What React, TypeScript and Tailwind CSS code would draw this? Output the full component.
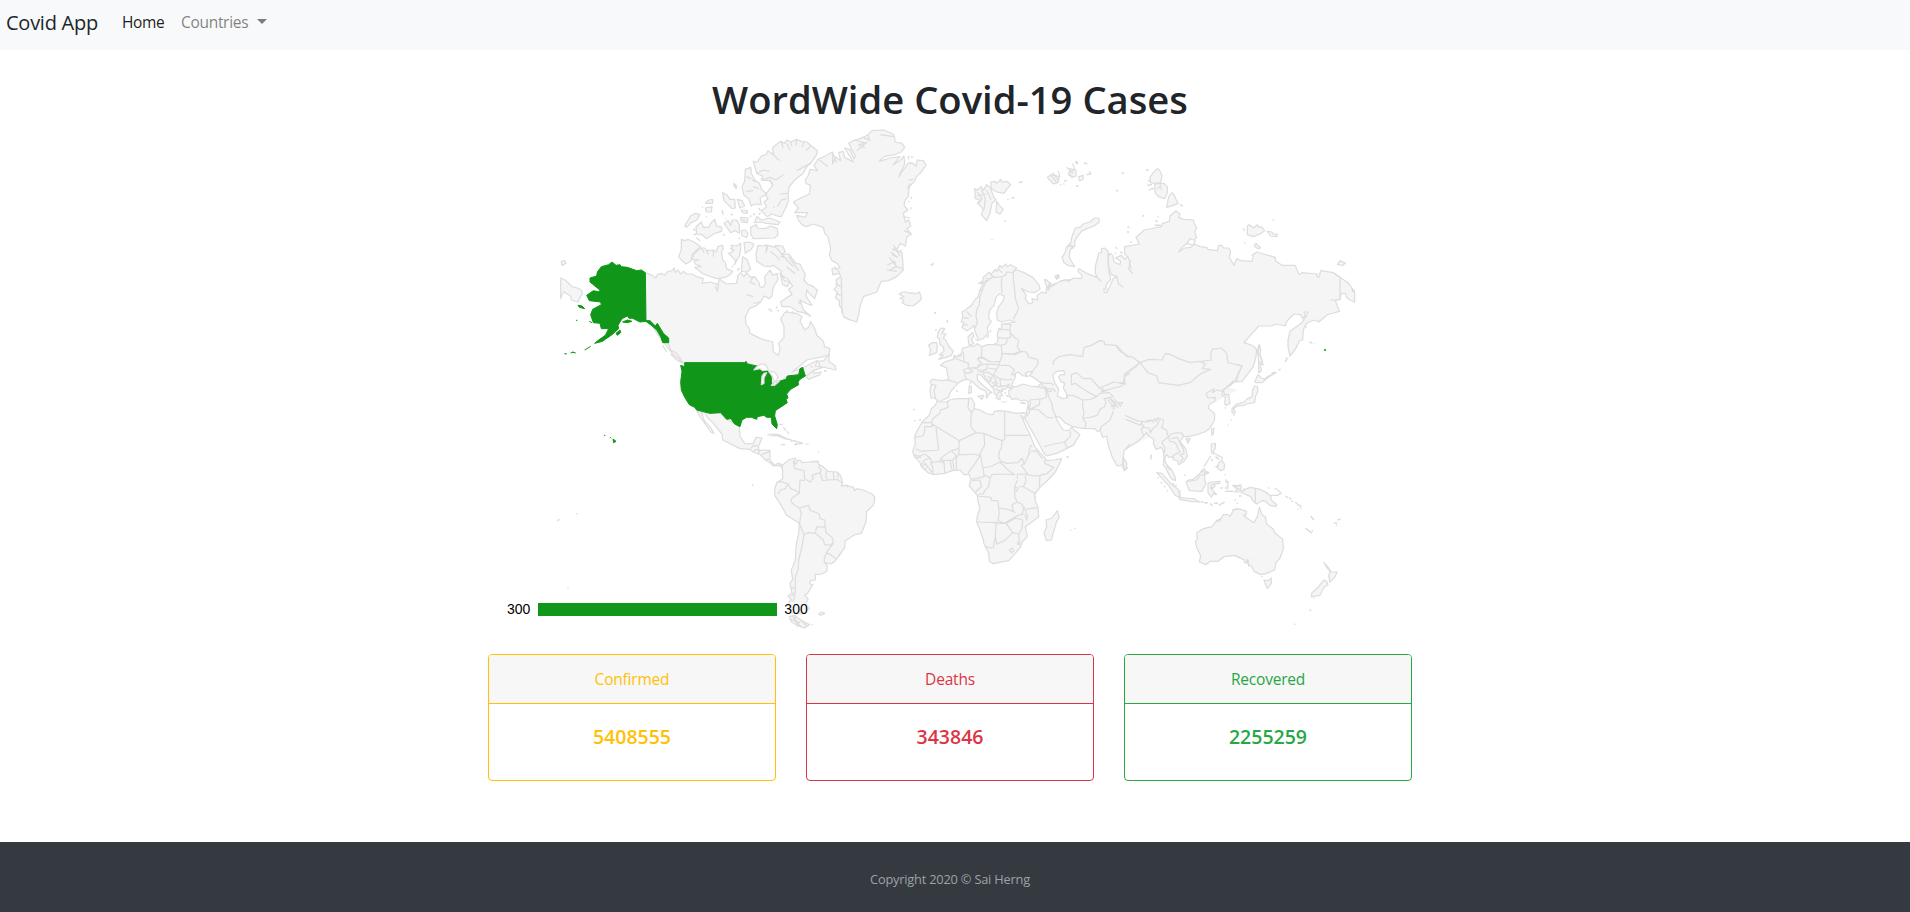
import React from "react";

type Region = { x: number; y: number; land: string[]; lines?: string[]; water?: string[]; active?: string[]; specks?: string[] };

const arctic: Region = {
  x: 540,
  y: 120,
  land: [
    "M316,458 336,466 348,474 352,464 364,460 374,466 384,454 396,452 402,444 406,458 414,450 422,462 430,454 440,462 456,462 470,470 490,476 486,490 510,486 534,494 538,476 550,486 562,492 590,490 594,466 602,458 612,470 620,458 632,472 644,470 656,486 660,500 670,502 676,490 674,470 684,458 690,450 698,466 712,460 714,480 700,500 696,528 688,536 672,528 662,546 650,556 628,566 616,590 618,612 628,626 630,640 662,656 698,666 700,696 714,706 720,690 716,670 732,652 732,620 722,596 736,576 752,578 770,580 786,590 780,604 794,630 806,622 812,604 826,630 830,646 850,664 854,680 870,686 866,706 850,710 800,720 782,736 756,756 800,738 822,726 832,722 826,738 848,742 820,752 806,764 794,768 738,772 706,796 690,780 660,742 616,728 434,728 424,726 412,714 400,704 384,684 370,664 350,640 340,620 316,602z",
    "M62,474 76,480 96,500 112,504 124,510 128,520 120,532 114,546 94,540 92,528 72,516 66,524 62,536z",
    "M64,424 74,422 78,430 66,436z",
    "M424,358 434,362 444,358 462,366 482,380 468,392 458,402 452,424 438,432 426,422 416,410 424,390z",
    "M482,384 494,384 500,392 520,390 528,396 534,380 548,376 550,388 544,396 548,420 556,428 560,446 578,454 570,464 556,472 530,476 490,462 464,442 484,440 466,432 462,424 478,420 458,418 460,404z",
    "M574,376 590,378 602,370 602,390 598,408 588,424 578,412 566,400 578,396z",
    "M612,368 628,366 642,372 634,388 616,400z",
    "M608,410 622,420 632,448 620,456 604,454z",
    "M654,376 672,378 680,374 678,398 684,376 708,382 706,376 728,378 736,396 724,404 746,402 768,430 780,432 796,464 792,480 802,492 820,500 832,510 824,536 806,518 800,510 798,528 816,556 802,552 780,540 790,570 812,588 790,578 772,574 750,560 726,560 722,546 744,530 756,524 746,508 758,498 744,478 722,464 724,454 700,436 690,440 672,438 650,424 648,400z",
    "M720,458 734,482 750,486 742,500 728,494z",
    "M652,324 676,326 692,318 712,326 714,344 704,354 640,356 632,342 632,322 650,314z",
    "M650,290 664,300 690,294 720,306 714,314 680,310 662,306 644,308z",
    "M640,124 652,126 664,108 678,104 684,92 700,104 698,84 708,74 722,64 734,70 740,60 752,66 770,58 784,64 800,66 832,92 830,104 812,130 800,140 790,160 764,180 748,200 744,220 746,240 738,262 724,290 712,288 696,282 682,290 664,272 680,260 672,246 684,236 676,224 698,196 690,182 664,180 668,168 650,160z",
    "M616,148 632,142 634,160 644,180 658,190 666,210 680,222 660,234 664,254 644,252 634,258 626,236 612,226 606,200 614,184z",
    "M468,320 484,306 490,322 506,322 512,310 524,298 530,318 546,322 544,334 520,342 500,356 486,344 470,342z",
    "M434,318 452,288 466,280 480,284 470,300 454,308 440,322z",
    "M552,310 564,302 572,316 576,300 590,300 598,314 598,340 586,332 572,338z",
    "M604,332 616,330 624,340 620,352 606,348z",
    "M548,218 562,226 570,238 584,238 586,264 576,266 552,242z",
    "M592,238 606,242 614,258 600,264z",
    "M496,250 506,240 518,238 518,250z",
    "M496,264 516,260 514,276 500,276z",
    "M602,292 624,294 622,308 604,306z",
    "M604,270 622,272 622,280 608,278z",
    "M480,362 470,354z",
    "M582,190 590,198 588,206z",
    "M840,740 834,724 852,722 868,700 866,724 886,738 888,750 862,744z",
    "M798,768 820,752 822,760 844,756 840,764 806,778z",
  ],
  lines: [
    "M700,104 718,122M722,64 730,84M740,70 750,90M752,66 756,80M770,58 768,78M792,66 786,82M812,78 798,92M812,130 770,152M650,160 670,150 688,154M664,180 690,172 708,180 730,164M700,196 690,180M744,220 720,222M740,236 724,240 712,260",
    "M636,180 650,186M640,200 656,206M618,214 640,212M620,170 634,176",
    "M536,494 532,514 526,498M640,470 630,486 646,494M660,546 640,550M640,530 620,524M370,680 376,690M384,668 392,690 410,700 430,730 410,720 392,702M368,676 380,696",
    "M484,384 492,398M500,392 506,404M520,390 520,410M570,384 584,392M690,394 706,406 720,420M710,384 740,420 760,440M720,408 742,416M740,440 766,462M746,410 776,452",
  ],
  specks: [
    "M486,262h3M498,290h3M546,270l4,14M556,296h3M572,282l6,3M608,300l8,2M640,280l4,6M630,290l4,-3M656,264l6,8M662,278l-6,6M700,262h4M548,344h6M460,326l6,6M460,344l10,-2M596,356l5,-2M686,566l10,8M708,566l4,-6M716,574l-3,-4M740,570l2,8M756,574l3,6M808,590v2M774,546l8,4M590,420l-8,16M598,444l-6,8M575,438l4,4M582,192v8M852,752l8,2M812,740h6",
  ],
  active: [
    "M316,458 304,450 290,452 262,442 244,440 240,434 228,436 216,426 206,434 184,440 172,456 170,468 150,474 150,486 172,504 180,510 178,516 160,512 140,526 148,542 182,546 184,554 158,568 152,584 160,608 180,610 184,626 206,626 196,646 176,660 164,670 188,664 196,658 216,644 236,626 234,616 246,596 262,588 268,596 276,594 300,606 318,604 334,616 350,630 362,650 368,668 386,668 386,654 370,640 352,610 346,618 330,602 318,602z",
    "M114,556 126,558 134,566 118,562z",
    "M228,640 240,630 242,638 232,646z",
    "M134,690 152,679M73,701 81,702M92,699 98,696 107,699M148,604 156,608M108,601h4M248,606 262,600 276,604 262,608z",
  ],
};

const north: Region = {
  x: 780,
  y: 120,
  land: [
    "M40,246 58,236 88,222 92,196 78,190 76,180 84,168 90,148 104,150 112,152 102,136 114,118 136,108 150,100 158,96 158,132 166,110 182,122 176,98 190,94 194,112 220,126 194,84 210,88 222,116 226,108 206,70 220,62 234,58 254,50 264,44 276,32 310,30 340,42 344,54 346,66 366,70 374,82 364,96 344,104 312,110 298,124 330,114 360,110 340,134 362,120 372,108 374,132 356,170 370,150 384,130 396,128 408,138 412,120 430,122 438,136 422,158 408,172 404,184 388,200 384,230 376,240 372,256 384,270 370,280 376,306 386,300 392,318 380,326 394,342 380,352 376,378 360,370 354,384 338,388 366,398 368,420 370,450 350,470 326,482 304,484 290,516 250,530 240,560 236,584 230,606 206,598 190,590 186,568 178,556 178,542 166,534 172,518 162,508 172,496 168,480 182,470 178,460 158,464 156,446 180,444 172,430 156,422 148,404 152,386 144,350 134,340 130,322 100,312 78,320 66,314 56,302 50,286 76,292 82,278 44,278 56,264z",
    "M358,522 372,530 360,534 372,542 366,548 380,556 400,558 422,540 424,532 418,516 404,522 398,518 390,520 380,516 368,516z",
    "M584,206 592,210 604,200 610,212 620,194 632,204 640,230 648,240 636,250 630,280 620,302 604,284 610,268 600,256 592,250 600,240 586,236z",
    "M632,186 644,184 650,190 662,178 666,186 680,184 692,194 680,208 672,220 650,216 634,206z",
    "M650,244 658,256 670,268 660,282 648,276z",
  ],
  lines: [
    "M118,120 144,140M158,100 170,128M224,60 258,70 236,74 254,84M230,92 262,66M250,52 272,62M264,44 268,60M300,44 340,50M328,412 350,440 368,446M322,436 344,424 348,440 330,450 346,440M332,396 352,412 336,404M340,376 356,396 366,390M350,392 360,408M320,450 350,454M184,472 186,580M162,440 180,458M166,492 184,500M168,520 182,526M592,216 606,236 596,250M604,210 616,236 612,270M620,210 634,240M590,228 620,222M384,180 400,178M392,190 382,206M372,332 392,340M370,290 390,294",
  ],
  specks: ["M716,188l12,-3M682,238h4M694,234l10,-1M673,305l4,-3M634,359h4M453,436l8,-5M462,577l6,3M502,603v5M386,108v10M396,108v6M388,128l4,4M392,232l4,4M392,262v6M384,244l4,2M466,632l4,-4"],
};

const americas: Region = {
  x: 540,
  y: 320,
  land: [
    "M600,320 584,312 560,298 542,278 510,280 470,272 480,290 500,318 512,336 522,340 510,320 494,304 484,278 498,278 500,290 520,310 546,342 548,360 600,386 628,388 640,396 660,404 676,420 690,428 700,438 716,436 730,446 726,434 714,430 704,436 690,420 690,392 672,390 656,392 656,378 666,354 648,352 640,370 616,372 600,350 598,318",
  ],
  lines: [
    "M630,388 640,376 654,378M640,396 648,388 660,392 654,402M664,404 690,394M688,418 676,418M682,346 692,342 716,344 736,354 754,360 734,356 710,346 690,348M752,364 762,362 788,370 764,374 770,368M722,374h14M796,372h10M718,314h10M730,322l8,10M742,334l4,8M834,397h3M637,493l2,5M52,602 60,598M108,581h4M82,806h4",
  ],
  active: [
    "M434,128 614,128 618,124 622,132 660,140 684,154 694,168 694,184 696,196 706,194 718,184 738,178 742,168 776,164 780,146 788,142 796,168 780,178 774,186 776,194 752,208 740,222 744,234 738,238 742,248 706,272 704,288 712,314 710,326 696,312 694,292 680,292 672,286 652,290 650,298 634,292 620,292 606,300 600,320 584,312 572,296 560,298 542,278 510,280 470,270 464,262 448,254 434,232 424,210 422,186 426,154 422,136 434,140z",
    "M192,346h4M210,352l4,2M219,357 228,364 221,368z",
  ],
  water: [
    "M642,150 650,140 662,132 676,134 686,150 668,152 660,146z",
    "M664,194 666,168 672,160 680,158 672,174 672,190z",
    "M686,154 704,156 714,170 710,182 702,184 696,168z",
    "M694,196 706,186 718,184 704,196z",
  ],
};

const southAmerica: Region = {
  x: 760,
  y: 430,
  land: [
    "M66,108 74,100 86,90 104,84 108,88 102,98 108,102 112,92 120,90 126,98 150,96 176,94 174,102 186,108 204,124 232,126 242,138 248,158 244,168 256,166 280,172 284,182 290,176 310,180 336,192 344,200 344,212 340,226 320,244 318,276 304,310 284,314 256,332 254,352 238,376 226,392 214,402 194,398 202,408 200,424 186,432 166,434 166,450 150,452 150,462 158,464 144,488 134,496 144,506 138,520 148,536 130,552 96,550 86,516 94,510 84,498 96,490 90,460 98,448 94,420 106,390 108,350 116,310 118,280 80,256 60,220 44,196 44,180 50,158 68,146 68,124z",
    "M88,560 104,556 122,570 148,584 134,594 112,586 94,576z",
  ],
  lines: [
    "M50,158 62,154 84,162 76,176 62,180 54,192M84,162 92,176 104,180 118,190 120,150 134,152M118,190 96,204 92,214 104,226 118,234 146,226 150,240 178,252 180,266 194,270 196,292M118,234 124,250 118,280 132,314M132,314 142,308 166,310 170,290 196,292 198,308 216,322 220,338 210,346 194,344 190,330 166,310M132,314 126,350 116,390 114,420 106,440 106,470 104,500 98,516M220,340 206,358 198,370 192,390 194,398M198,368 212,374 228,386M100,92 104,116 132,122 134,146 150,156 160,146 156,136 180,128 184,120 176,112 180,104M180,128 188,152 204,150 232,148 246,158M200,124 196,138 204,150M220,126 222,148M234,128 234,144M244,168 258,166",
    "M98,560 124,592M104,556 112,590M118,566 140,588M92,568 120,578M90,470 104,476M94,500 104,488M236,378l6,-10M262,164v8M154,94h20M174,66h3M176,552l8,-6 10,4 -12,6zM154,584h4",
  ],
};

const europe: Region = {
  x: 900,
  y: 240,
  land: [
    "M604,124 590,112 560,100 536,86 534,94 546,106 544,116 520,114 506,124 496,120 476,126 450,142 446,150 440,146 450,130 438,118 434,124 440,138 438,160 426,156 412,166 412,180 396,176 398,188 388,192 376,178 378,164 364,146 386,156 404,158 420,148 418,136 398,112 372,98 352,90 340,94 350,84 332,74 322,80 318,72 306,82 300,76 290,94 286,88 272,104 268,96 250,112 248,124 236,130 250,130 240,150 234,170 222,182 216,194 196,210 186,216 188,230 184,246 192,248 186,262 200,272 214,264 222,256 226,276 232,290 236,300 250,296 264,282 262,262 274,244 266,235 268,212 282,196 288,172 298,162 312,168 310,182 296,200 290,218 292,240 304,246 328,240 346,246 304,252 306,264 298,266 292,282 294,304 284,314 262,314 246,320 232,312 218,320 206,312 204,290 218,278 222,288 214,298 222,310 208,318 200,322 188,324 184,340 170,350 162,346 160,358 146,362 134,366 122,376 140,384 142,400 146,418 128,422 96,418 90,424 94,434 90,452 93,474 104,474 116,486 128,480 146,472 150,458 164,440 180,425 196,418 210,420 222,430 240,446 256,452 260,462 258,474 262,472 268,460 276,458 256,442 242,430 232,418 232,404 242,404 254,418 266,430 280,446 284,462 292,468 288,474 300,480 300,468 308,466 298,452 308,454 306,446 316,448 324,440 334,446 326,452 328,468 336,478 352,476 362,482 374,480 384,484 384,496 378,524 372,530 386,556 400,580 416,610 432,640 440,648 470,640 500,626 522,614 526,604 540,584 520,568 516,560 506,572 490,570 478,552 466,530 480,532 494,548 514,558 530,562 554,566 584,566 592,574 600,570 608,592 620,588 624,612 636,650 650,676 660,678 668,672 672,632 690,612",
    "M122,264 134,266 126,280 138,282 130,294 138,302 146,318 160,334 154,346 138,352 116,358 130,346 118,344 132,334 130,320 120,314 118,296 112,292 114,278z",
    "M86,316 96,308 110,308 112,322 110,338 88,346 92,330z",
    "M208,436 214,440 214,458 206,460z",
    "M234,468 252,466 246,478z",
    "M670,652 680,668 680,682 672,692z",
  ],
  water: [
    "M334,440 340,422 346,412 346,400 356,396 366,406 384,410 376,400 390,394 398,396 388,406 400,412 424,430 412,440 390,438 370,432 350,440z",
    "M458,404 470,394 492,392 494,404 482,404 476,410 482,424 494,430 490,444 500,462 500,474 488,476 472,468 476,448 464,428z",
  ],
  lines: [
    "M226,264 232,246 228,228 230,210 238,194 240,170 250,142 258,126 276,112 290,112 306,110 318,104 320,96 340,98M340,94 340,120 344,150 346,176 356,206 340,238M306,112 304,130 306,160",
    "M312,252 332,254 330,270 316,268 300,270M330,270 332,292 316,296 292,292M328,276 346,294 356,300 352,320 362,336 346,344 304,340M322,298 318,312 302,316 282,312",
    "M246,320 244,352 272,366 300,364 306,348 304,316M304,340 340,342 360,334 380,336 386,352 412,358 414,372 396,396M300,364 296,376 326,376 344,390 334,404 346,404M264,384 290,388 296,378M290,390 280,404 300,416 318,420 336,418M300,416 302,438 322,438 330,432",
    "M190,336 192,366 206,370 204,384 234,382 246,372 232,356 244,350M234,356 250,352 264,362 272,366M232,376 262,372 294,374M204,384 232,386 234,390 256,390 264,374M190,390 204,384 218,394 204,400 194,396zM194,396 196,412 202,418M160,352 178,360 192,366M170,350 186,346M142,420 172,428M92,434 108,436 102,452 106,474",
    "M232,396 250,394 262,386M246,400 262,396 276,404 288,420 286,432 294,440M250,402 258,416 270,426 276,410M276,430 284,426 294,430M276,444 284,434 294,440 316,438 330,432M320,440 334,446 340,442M264,408 272,416",
    "M412,440 436,446 440,470 430,476 388,480M420,426 436,430 452,430 462,436M424,434 440,444 462,448 466,456M440,444 446,470 456,490 458,510 470,532M436,446 452,456 456,450M420,476 418,494 390,508 404,508 416,510 440,532 462,534M388,480 392,490 386,508M384,498 390,514 380,530M384,506 390,510M432,620 462,612 494,606 510,590 512,574M494,606 502,624M366,490h12",
    "M504,466 520,466 548,480 548,500 552,520 548,534 558,550 554,566M504,466 500,476M514,434 514,404 530,398 550,416 574,416 598,444 624,434 640,426 680,432M514,434 526,430 540,440 560,454 590,470 572,478 548,480M590,470 600,460 628,458 640,470 622,474 612,476 618,486 614,500 600,508 592,526 570,532 552,534M598,444 610,448 604,454 628,448 640,444 660,440 674,432M614,476 628,474 644,486 650,500M640,514 630,540 604,560 600,575M604,456 620,452",
    "M460,374 460,364 476,350 510,344 548,350 552,322 574,316 600,302 612,304 614,314 648,316 660,334 690,352M676,408 690,400",
    "M200,214 214,230M190,232 206,236M188,256 204,254M240,152 250,146M246,130 262,120M256,114 270,118M272,104 284,112M296,88 306,98M624,480 644,506M632,478 654,504M642,476 662,500M650,488 668,488 660,500M632,500 642,494 640,510",
    "M304,486h16M360,490l14,-4M168,452l6,3M210,424l2,8M286,446 300,454 290,462M316,456v6M318,466l8,4M500,650l6,2M40,508l4,3M42,542h4M58,541l4,-2M142,240v6M94,74l6,-3M104,216l4,4M226,296l8,8M228,312h8M268,278l6,-8M262,294l4,-8M298,264l-2,6M466,108l10,-2 2,6 -8,6z",
  ],
};

const africa: Region = {
  x: 900,
  y: 380,
  land: [
    "M112,64 104,78 94,86 88,106 68,124 56,144 44,168 46,190 38,214 44,230 60,248 66,262 84,278 100,284 132,280 158,272 180,270 192,284 208,284 212,300 208,318 222,334 232,346 234,364 240,384 232,408 230,426 240,450 250,480 252,492 266,520 268,544 280,551 326,542 346,520 362,500 366,486 382,470 376,440 396,426 416,410 414,382 406,364 404,342 422,320 444,300 466,276 484,240 484,236 462,240 440,242 432,230 420,218 404,200 396,180 388,160 378,140 366,112 362,106 372,116 380,100 370,98 350,100 320,94 296,92 284,94 278,104 262,102 240,90 222,86 224,72 214,54 200,56 170,56 148,60 140,66 122,66z",
    "M472,392 478,412 470,424 462,452 454,480 440,482 432,460 440,440 438,420 456,414z",
  ],
  lines: [
    "M142,64 144,82 122,90 120,100 98,116 96,128 66,128M96,128 96,140 74,140 74,154 68,168 44,172M96,132 178,182M108,142 116,210 62,214 48,206M178,182 176,206 154,212 130,228 118,244M178,182 228,158 212,140 214,96 204,84 206,56M222,88 214,100M228,158 250,160 306,182 314,178 314,94M314,166 388,166M306,182 304,208 298,212 296,230 302,244M252,160 254,196 240,220 246,250M178,206 176,224 200,224 222,222 240,226M240,226 226,250 216,262 204,280M176,224 168,236 170,270M158,240 162,270M150,240 156,272M132,242 134,280M120,234 130,242 158,240 170,228 156,214M100,284 98,262 92,248 104,246 118,244 132,248M62,258 74,240 90,234 98,250M44,226 60,228 74,222 90,234M44,232h20M66,262 76,250 84,262 98,278M80,264 74,270",
    "M246,250 250,270 252,290 214,298M248,264 276,258 300,246 324,270 344,284 300,282 276,284 270,294 254,284M304,244 320,250 354,248 366,234 372,250 364,256 384,284M390,216 372,254M386,218 392,196 396,200M392,214 408,212 428,236M436,236 434,250 462,262 442,280 420,286 400,288 384,284 352,282 352,296M420,286 418,320M376,288 378,304 370,320 408,342M352,300 344,320 344,350 352,366 336,374 340,394 322,388 296,384 294,362 276,362 272,352 234,348M270,294 266,320 254,332 250,342 236,342M216,302 240,300 244,320 226,336M296,384 298,400 294,422 312,430 340,414 354,406 372,402M294,428 230,426M352,366 368,374 370,390 364,404M378,388 414,382M372,380 382,408 380,420 374,404M288,430 286,470 280,504 262,502 258,498M288,430 318,430 338,458 326,470 314,482 290,492 286,470M318,430 348,414 368,420 366,446 356,462 338,458M356,462 358,484M354,486l6,2 -2,6 -6,-2zM328,510 336,504 342,512 334,518zM344,322 354,324 350,334 342,332M358,320 370,320M340,394 346,398",
    "M510,450l4,1M523,445h4M40,88h3M42,122h4M58,121l4,-2M500,230h6M404,350l4,3",
  ],
};

const siberia: Region = {
  x: 1040,
  y: 140,
  land: [
    "M176,424 166,400 166,380 176,340 186,336 184,326 194,324 204,334 204,370 208,400 212,418 200,432 196,448 180,446 182,454 200,458 214,430 220,414 232,410 214,404 206,380 204,350 212,340 218,346 222,366 240,374 242,364 226,354 244,346 254,358 262,350 254,340 254,320 298,312 288,292 302,280 312,270 344,264 364,260 368,250 388,244 390,228 408,212 420,222 416,232 430,238 460,240 464,254 470,262 464,276 470,294 460,300 450,296 440,312 426,322 416,336 434,324 452,322 464,312 480,320 500,322 504,328 532,332 536,316 546,316 550,324 566,324 572,334 568,352 582,376 590,356 602,362 636,364 640,350 636,346 650,336 706,352 706,362 726,376 766,376 770,388 778,404 786,398 832,402 830,408 836,412 838,408 842,392 880,398 900,412 924,428 936,444 944,456 944,486 930,480 920,472 916,460 904,460 900,478 886,482 898,514 870,522 862,524 836,546 824,540 806,546 798,552 790,570 788,600 778,602 766,628 750,648 744,620 744,600 750,574 784,550 798,530 804,516 792,516 796,526 788,536 782,524 762,522 740,544 736,558 706,552 696,558 656,558 612,608 630,614 640,618 650,630 648,650 640,680 620,706 606,724 586,726 578,724 562,740",
    "M176,234 178,246 162,258 140,266 124,274 112,290 104,304 104,318 90,330 88,350 92,360 104,380 84,376 72,368 66,352 76,336 80,320 92,310 96,290 106,264 120,262 130,252 150,246 164,234z",
    "M352,86 358,90 366,106 362,128 344,130 332,128 330,112 338,100z",
    "M344,132 372,130 382,140 382,158 374,176 356,170 346,160z",
    "M380,202 386,170 396,158 402,164 408,178 414,190 400,196z",
    "M622,258 628,254 640,264 652,254 656,262 664,260 674,272 660,282 640,290 622,284z",
    "M682,274 696,276 700,282 712,282 710,290 692,288z",
    "M642,318 648,310 662,324 654,326z",
    "M892,374 900,362 916,370 908,376z",
    "M34,104 58,110 54,128 40,132 22,112z",
    "M90,86 108,90 108,108 96,112 86,102z",
    "M116,110 130,106 128,120 118,122z",
  ],
  lines: [
    "M230,410 236,432 250,442M264,350 270,370 266,388 278,400M274,360 268,368 274,388M206,338v20M900,412v68M870,480h20M880,398 900,412M936,444 938,456 944,450M656,614 652,640 662,650 664,666 670,674 660,672 656,696",
    "M300,668 282,682 254,702 250,728 218,730 200,742 180,734 140,716 120,710 108,704 96,710 96,740M230,616 260,650 276,650 300,668 326,658 366,660 376,640 392,644 416,656 450,668 480,664 496,672 486,686 512,688 484,700 462,718 450,728 414,736 356,728 350,708 324,698 300,668M486,664 514,660 512,644 516,628 544,624 560,640 564,668 606,678 594,704 590,724",
    "M360,140 366,150M364,136 352,146M80,82 100,100M90,100 104,86M98,70 104,88M106,64 112,74M84,104 100,110M30,104 50,126M38,98 54,120M54,92 60,110M80,320 104,318M88,310 100,326M440,310 460,316 466,300",
  ],
  specks: [
    "M132,69l10,2M108,64l6,6M140,104l12,-2 -4,-8M72,122h8M70,132h4M108,138h8M60,134h4M246,102l2,-4 4,2M228,150l6,3M318,90h8M324,120l8,6M322,136l14,-2M326,150h6M332,146h10M420,194l8,4M308,230l4,-5M262,262h6M264,272v8M270,306h6M352,230h4M346,244h8M344,256h18M226,322l6,4M240,336l8,4M610,266l4,6M612,308h4M698,240h4M224,340h4M46,410l8,-6 2,6 -6,4zM120,694l8,0M186,742h16M190,750l16,-4M808,606l8,3M820,610l2,2M796,560l4,2M742,652l-6,14M716,690l4,-2M704,696l-10,6M690,706l-12,8M12,418l20,12 -8,16M32,438l14,-8M60,424l16,-4 24,0",
  ],
  active: ["M853,629h4v2h-4z"],
};

const asiaPacific: Region = {
  x: 1100,
  y: 340,
  land: [
    "M382,140 370,150 374,164 386,164 390,190 378,196 374,190 376,172 366,166 368,154 350,150 338,158 342,146 318,160 324,174 346,172 344,184 330,192 324,204 334,212 344,222 344,240 336,254 328,266 314,276 290,284 266,290 250,290 240,304 258,328 262,350 250,366 236,374 232,362 222,360 216,350 206,352 200,344 196,350 194,362 202,376 214,388 226,412 226,422 214,416 204,398 198,384 190,376 192,356 190,332 184,322 168,328 160,310 162,298 148,290 140,278 130,288 116,302 90,318 74,330",
    "M290,578 310,566 336,560 350,542 358,544 370,524 384,524 390,530 402,508 414,506 440,514 438,524 430,526 446,538 462,548 472,530 478,502 486,524 496,530 500,552 520,568 524,578 548,598 550,628 540,654 528,668 524,690 500,700 482,704 462,694 454,678 446,676 444,660 436,670 430,658 404,646 372,650 354,664 330,664 318,674 298,666 302,648 290,622 286,604 292,598z",
    "M492,720 504,722 514,714 514,730 502,746z",
    "M672,668 686,684 694,696 712,696 704,712 690,726 686,708 690,694 680,682z",
    "M672,720 680,724 684,734 672,742 660,766 634,770 636,758 654,742z",
    "M170,398 186,400 210,428 234,448 240,472 226,466 206,436z",
    "M236,472 256,474 270,476 282,476 300,486 270,484 240,478z",
    "M258,426 266,420 280,418 300,400 312,386 318,394 326,398 314,404 314,420 318,430 306,454 268,452z",
    "M324,430 336,426 360,424 358,430 334,434 332,446 346,436 336,448 350,464 340,460 334,472 324,458z",
    "M398,436 424,438 422,450 430,454 440,446 452,442 480,448 500,458 512,468 514,480 530,494 528,500 510,496 496,484 486,482 470,492 460,484 452,470 434,462 420,456 404,456 412,448z",
    "M334,312 346,310 346,326 340,332 344,342 334,338z",
    "M358,366 366,362 374,374 372,388 362,392 350,382z",
    "M334,268 342,264 340,280 336,286z",
    "M258,296 270,296 264,310z",
    "M70,368 82,384 74,392 68,382z",
    "M396,206 410,192 430,188 440,178 456,170 458,150 464,138 472,140 474,154 466,170 464,188 440,192 430,198 416,196 400,206 406,216 402,222 396,216z",
    "M464,126 474,104 484,114 498,118 486,128 470,128z",
    "M478,14 482,30 480,44 488,66 480,66 484,92 476,98 476,70 474,30z",
  ],
  lines: [
    "M382,140 392,136 404,124M366,150 378,144 404,124 426,78 410,74M374,164 388,164",
    "M38,206 20,240 0,254M42,190 50,200 66,222 110,242 140,246 162,240 176,234 190,240 190,250M70,226 72,236 122,256 126,246M124,246 132,262 124,268 130,286M126,262 148,264 150,276M136,246 146,240 160,244M150,280 158,266 172,256 176,246M190,250 184,262 200,270 202,284 206,290M206,290 188,304 186,310 196,324 192,340M206,290 214,282 232,278 246,280 252,290M206,290 210,304 222,306 230,314 232,322 240,336 220,346 220,356M214,296 232,292 238,306 250,326 252,342 240,344 250,356 240,366M200,378 212,390M32,150 42,176 38,206M0,142 32,132 74,130 74,104 110,78 118,66M0,150 24,148",
    "M264,424 290,420 300,406 314,404M466,446 466,490M240,450v22M302,392 320,400M332,348 312,380M346,342 366,352M350,350 358,360M352,356 346,350M346,380 358,378M366,350 366,360M512,466 530,466 544,460 532,448M410,444 424,452M404,440 424,434M438,656 448,680M350,542 362,536M396,510 414,508",
    "M154,238 162,248M162,236 172,246M170,234 180,244M32,180 52,200M40,180 62,204M50,184 68,198M38,196 46,206",
  ],
  specks: [
    "M302,486h8M312,488h12M330,490l8,8M342,490h12M356,496l18,-10M378,418v12M384,422v12M360,444h8M374,444h12M376,454h24M416,468h8M404,480h4M410,490h4M374,404h3M252,406h4M154,344l-2,14M172,414h4M182,426l4,4M192,438l4,4M200,452h4M218,430l4,4M226,434l4,4M374,204h4M382,256h3M392,242l3,-2M400,226h3M494,118l30,-18M524,100l6,-3M538,90l4,-3M504,444h4M524,446h6M556,468l8,6M568,474l6,3M574,484h6M586,486l6,6M592,494l12,4M592,508h3M600,502l4,2M632,528l10,12M616,564l20,16M636,570l2,4M702,550l10,-2M712,540l10,-2M708,556h3M484,710h4M640,774h4M628,811h6M582,853h4M430,446l6,4M380,436l6,4M336,356v8M452,654h2",
  ],
};

const regions: Region[] = [siberia, asiaPacific, europe, africa, north, arctic, americas, southAmerica];

function WorldMap() {
  return (
    <svg viewBox="488 124 924 530" width={924} height={530} className="block" role="img" aria-label="World map">
      <polygon points="1100,282 1229,387 1238,390 1125,450 1129,443" fill="#f5f5f5" />
      {regions.map((r, i) => (
        <g key={i} transform={`translate(${r.x} ${r.y}) scale(0.33333)`} strokeWidth={3.7} strokeLinejoin="round" stroke="#dddddd" fill="none">
          {r.land.map((d, k) => <path key={k} d={d} fill="#f5f5f5" />)}
          {r.lines?.map((d, k) => <path key={k} d={d} />)}
          {r.specks?.map((d, k) => <path key={k} d={d} strokeWidth={4.5} />)}
          {r.active?.map((d, k) => <path key={k} d={d} fill="#109618" stroke="#109618" strokeWidth={3} />)}
          {r.water?.map((d, k) => <path key={k} d={d} fill="#ffffff" />)}
        </g>
      ))}
    </svg>
  );
}

type CardProps = { label: string; value: string; tone: string; line: string };

function StatCard({ label, value, tone, line }: CardProps) {
  return (
    <div className={`h-[127px] w-[288px] overflow-hidden rounded border text-center ${tone}`}>
      <div className={`flex h-[49px] items-center justify-center border-b bg-[#f7f7f7] pt-[2px] text-[15.5px] tracking-[-0.2px] ${line}`}>{label}</div>
      <div className="pt-[21px] text-[19.5px] leading-6 font-semibold">{value}</div>
    </div>
  );
}

export default function App() {
  return (
    <div className="flex h-[912px] flex-col overflow-hidden bg-white font-['Open_Sans','Noto_Sans',sans-serif] text-[#212529]">
      <nav className="flex h-[50px] shrink-0 items-center bg-[#f8f9fa] pb-[4px] pl-[6px]">
        <span className="w-[116px] text-[20px] tracking-[-0.25px]">Covid App</span>
        <span className="w-[59px] text-[15.5px] tracking-[-0.4px] text-black/90">Home</span>
        <span className="flex items-center gap-[9px] text-[15.5px] tracking-[-0.3px] text-black/50">
          Countries
          <span className="mb-[3px] border-x-[5px] border-t-[5px] border-x-transparent border-t-black/50" />
        </span>
      </nav>
      <main className="flex h-[792px] w-[1900px] shrink-0 flex-col items-center pt-[25px]">
        <h1 className="mb-px h-12 text-[38.2px] leading-12 font-semibold whitespace-nowrap">WordWide Covid-19 Cases</h1>
        <div className="relative h-[530px] w-[924px] shrink-0">
          <WorldMap />
          <div className="absolute top-[477px] left-[19px] flex items-center gap-[7.5px] font-['Liberation_Sans',sans-serif] text-[14px] leading-[16px] text-black">
            <span>300</span>
            <span className="h-[13px] w-[239px] bg-[#109618]" />
            <span className="[text-shadow:0_0_2px_#fff,0_0_2px_#fff,0_0_3px_#fff]">300</span>
          </div>
        </div>
        <div className="flex gap-[30px]">
          <StatCard label="Confirmed" value="5408555" tone="border-[#ffc107] text-[#ffc107]" line="border-[#ffc107]" />
          <StatCard label="Deaths" value="343846" tone="border-[#dc3545] text-[#dc3545]" line="border-[#dc3545]" />
          <StatCard label="Recovered" value="2255259" tone="border-[#28a745] text-[#28a745]" line="border-[#28a745]" />
        </div>
      </main>
      <footer className="h-[70px] shrink-0 bg-[#343a40]">
        <p className="flex h-[76px] w-[1900px] items-center justify-center text-[12.8px] tracking-[-0.2px] text-[#9fa2a5]">Copyright 2020 © Sai Herng</p>
      </footer>
    </div>
  );
}
